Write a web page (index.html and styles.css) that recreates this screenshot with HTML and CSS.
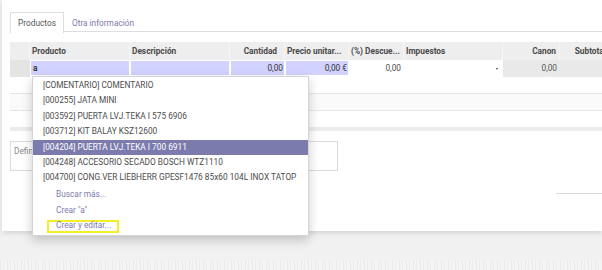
FILE: index.html
```html
<!DOCTYPE html>
<html lang="es">
<head>
<meta charset="utf-8">
<link rel="stylesheet" href="styles.css">
</head>
<body>
<div class="page">
  <div class="sheet">
    <div class="tabs">
      <div class="tab active">Productos</div>
      <div class="tab link">Otra información</div>
    </div>

    <div class="lines">
      <div class="row head">
        <div class="cell handle"></div>
        <div class="cell">Producto</div>
        <div class="cell">Descripción</div>
        <div class="cell num qty">Cantidad</div>
        <div class="cell">Precio unitar...</div>
        <div class="cell">(%) Descue...</div>
        <div class="cell">Impuestos</div>
        <div class="cell num">Canon</div>
        <div class="cell num subh">Subtotal</div>
      </div>

      <div class="row edit">
        <div class="cell handle"></div>
        <div class="cell field product">
          <div class="inp">a</div>
          <ul class="dropdown">
            <li class="item">[COMENTARIO] COMENTARIO</li>
            <li class="item">[000255] JATA MINI</li>
            <li class="item">[003592] PUERTA LVJ.TEKA I 575 6906</li>
            <li class="item">[003712] KIT BALAY KSZ12600</li>
            <li class="item active">[004204] PUERTA LVJ.TEKA I 700 6911</li>
            <li class="item">[004248] ACCESORIO SECADO BOSCH WTZ1110</li>
            <li class="item">[004700] CONG.VER LIEBHERR GPESF1476 85x60 104L INOX TATOP</li>
            <li class="item action"><span class="act">Buscar más...</span></li>
            <li class="item action"><span class="act">Crear "a"</span></li>
            <li class="item action"><span class="act marked">Crear y editar...</span></li>
          </ul>
        </div>
        <div class="cell field"><div class="inp"></div></div>
        <div class="cell field"><div class="inp num">0,00</div></div>
        <div class="cell field"><div class="inp num">0,00 €</div></div>
        <div class="cell num plain disc">0,00</div>
        <div class="cell plain tax"><span class="caret"></span></div>
        <div class="cell num ro">0,00</div>
        <div class="cell num ro sub">0,00</div>
      </div>

      <div class="row blank"></div>
      <div class="row blank alt"></div>
      <div class="row blank"></div>
      <div class="tfoot"></div>
    </div>

    <div class="bottom">
      <div class="note">Definir sus términos y condiciones ...</div>
      <div class="totals"></div>
    </div>
  </div>
  <div class="texture"></div>
</div>
</body>
</html>
```
FILE: styles.css
```css
html, body {
  margin: 0;
  padding: 0;
}

body {
  width: 602px;
  height: 270px;
  overflow: hidden;
  background: #f1f1f1;
  font-family: "Roboto", "Liberation Sans", Arial, sans-serif;
  font-size: 8.3px;
  color: #4c4c4c;
}

.page {
  height: 270px;
  display: flex;
  flex-direction: column;
}

.sheet {
  margin-left: 2px;
  width: 600px;
  height: 231px;
  box-sizing: border-box;
  padding: 12px 0 0 8px;
  background: #fff;
  box-shadow: 0 2px 5px rgba(0, 0, 0, 0.12);
  position: relative;
  z-index: 1;
}

/* tabs */
.tabs {
  display: flex;
  height: 20px;
  border-bottom: 1px solid #dedede;
  box-sizing: border-box;
}

.tab {
  padding: 0 7px;
  line-height: 20px;
  height: 20px;
  border: 1px solid transparent;
  border-bottom: none;
  box-sizing: border-box;
  color: #555;
}

.tab.active {
  border-color: #dedede;
  background: #fff;
  height: 21px;
}

.tab.link {
  color: #7c7bad;
}

/* lines table */
.lines {
  margin-top: 10px;
  width: 592px;
}

.row {
  display: grid;
  grid-template-columns: 20px 100px 100px 55px 64px 55px 99px 57px 56px;
}

.cell {
  padding: 0 3px 0 2px;
  white-space: nowrap;
  overflow: visible;
  box-sizing: border-box;
}

.num {
  text-align: right;
}

.head {
  height: 18px;
  background: #eeeeee;
  font-weight: 700;
  color: #4a4a4a;
}

.head .cell {
  line-height: 18px;
  border-right: 1px solid #f6f6f6;
  overflow: hidden;
}

.head .qty {
  padding-right: 7px;
}

.head .subh {
  padding-right: 9px;
  overflow: visible;
}

.edit {
  height: 17px;
}

.edit .handle {
  background: #e4e4e4;
}

.field {
  padding: 1px 1px 2px 1px;
}

.field.product {
  position: relative;
  padding-left: 1px;
}

.inp {
  height: 14px;
  line-height: 14px;
  background: #d2d2ff;
  padding: 0 1px 0 2px;
  color: #333;
}

.product .inp {
  font-weight: 700;
}

.plain {
  line-height: 17px;
  background: #fff;
}

.disc {
  padding-right: 3px;
}

.tax {
  display: flex;
  justify-content: flex-end;
  align-items: center;
  padding-right: 5px;
}

.caret {
  width: 0;
  height: 0;
  border-top: 2px solid #444;
  border-left: 1.5px solid transparent;
  border-right: 1.5px solid transparent;
}

.ro {
  background: #e9e9e9;
  line-height: 17px;
  color: #555;
}

.sub {
  padding-right: 0;
  margin-right: -3px;
}

.blank {
  height: 16px;
}

.blank.alt {
  height: 18px;
  background: #fafafa;
  border-top: 1px solid #e6e6e6;
  border-bottom: 1px solid #e6e6e6;
  box-sizing: border-box;
}

.tfoot {
  height: 4px;
  background: #ececec;
}

/* autocomplete dropdown */
.dropdown {
  position: absolute;
  top: 16px;
  left: 2px;
  width: 277px;
  margin: 0;
  padding: 1px 0 3px;
  list-style: none;
  background: #fff;
  border: 1px solid #d4d4d4;
  box-sizing: border-box;
  box-shadow: 0 4px 10px rgba(0, 0, 0, 0.2);
  z-index: 10;
  font-weight: 400;
}

.item {
  height: 15.4px;
  line-height: 15.4px;
  padding-left: 10px;
  color: #4c4c4c;
  white-space: nowrap;
}

.item.active {
  background: #7c7bad;
  color: #fff;
}

.item.action {
  padding-left: 14px;
  color: #7c7bad;
}

.act {
  display: inline-block;
  line-height: 6px;
  padding: 0 6px 3px 7px;
  border: 2px solid transparent;
  vertical-align: -1.5px;
}

.act.marked {
  border-color: #f4ee25;
}

/* bottom */
.bottom {
  display: flex;
  justify-content: space-between;
  margin-top: 10px;
}

.note {
  width: 328px;
  height: 30px;
  box-sizing: border-box;
  border: 1px solid #dcdcdc;
  padding: 4px 3px;
  color: #888;
}

.totals {
  width: 46px;
  margin-top: 52px;
  border-top: 1px solid #d8d8d8;
  height: 0;
}

.texture {
  margin-top: 30px;
  height: 9px;
  background: repeating-linear-gradient(90deg, #e9e9e9 0 1px, #f3f3f3 1px 3px, #ececec 3px 4px, #f4f4f4 4px 7px);
}
```
